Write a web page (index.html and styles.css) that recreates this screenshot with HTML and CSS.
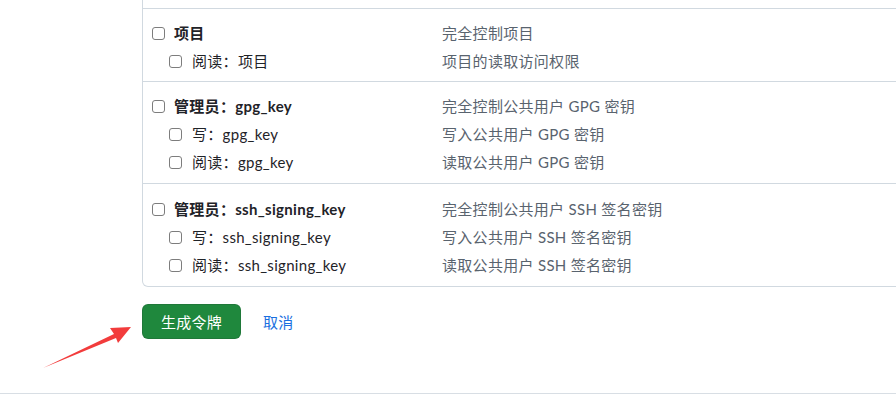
FILE: index.html
```html
<!DOCTYPE html>
<html lang="zh-CN">
<head>
<meta charset="utf-8">
<title>生成令牌</title>
<link rel="stylesheet" href="styles.css">
</head>
<body>
<div class="page">
  <div class="scopes">
    <div class="tail"></div>
    <div class="group g1">
      <label class="row top"><span class="lab"><input type="checkbox" class="cb"><span class="name">项目</span></span><span class="desc">完全控制项目</span></label>
      <label class="row sub"><span class="lab"><input type="checkbox" class="cb"><span class="name">阅读：项目</span></span><span class="desc">项目的读取访问权限</span></label>
    </div>
    <div class="group g2">
      <label class="row top"><span class="lab"><input type="checkbox" class="cb"><span class="name">管理员：gpg_key</span></span><span class="desc">完全控制公共用户 GPG 密钥</span></label>
      <label class="row sub"><span class="lab"><input type="checkbox" class="cb"><span class="name">写：gpg_key</span></span><span class="desc">写入公共用户 GPG 密钥</span></label>
      <label class="row sub"><span class="lab"><input type="checkbox" class="cb"><span class="name">阅读：gpg_key</span></span><span class="desc">读取公共用户 GPG 密钥</span></label>
    </div>
    <div class="group g3">
      <label class="row top"><span class="lab"><input type="checkbox" class="cb"><span class="name">管理员：ssh_signing_key</span></span><span class="desc">完全控制公共用户 SSH 签名密钥</span></label>
      <label class="row sub"><span class="lab"><input type="checkbox" class="cb"><span class="name">写：ssh_signing_key</span></span><span class="desc">写入公共用户 SSH 签名密钥</span></label>
      <label class="row sub"><span class="lab"><input type="checkbox" class="cb"><span class="name">阅读：ssh_signing_key</span></span><span class="desc">读取公共用户 SSH 签名密钥</span></label>
    </div>
  </div>
  <div class="actions">
    <button class="btn-primary" type="button">生成令牌</button>
    <a class="cancel" href="#">取消</a>
  </div>
  <hr class="divider">
  <svg class="arrow" width="140" height="90" viewBox="0 0 140 90" aria-hidden="true">
    <polygon points="43,68 114,34 110,28 131,27 118,43 116,38" fill="#f23c3c"/>
  </svg>
</div>
</body>
</html>
```

FILE: styles.css
```css
html, body {
  margin: 0;
  padding: 0;
  background: #fff;
  overflow: hidden;
}
body {
  font-family: Lato, "Noto Sans CJK SC", sans-serif;
  font-size: 15px;
  letter-spacing: 0.3px;
  color: #1f2328;
}
.page {
  position: relative;
  width: 896px;
  height: 407px;
}
.scopes {
  margin-left: 142px;
  width: 780px;
  border: 1px solid #d1d9e0;
  border-top: 0;
  border-radius: 0 0 6px 6px;
}
.tail {
  height: 8px;
}
.group {
  border-top: 1px solid #d1d9e0;
  padding: 10px 0 7px 9px;
}
.g1 {
  padding-bottom: 6px;
}
.g3 {
  padding-top: 11px;
}
.row {
  display: grid;
  grid-template-columns: 290px 1fr;
  align-items: center;
  height: 28px;
}
.lab {
  display: flex;
  align-items: center;
}
.sub .lab {
  padding-left: 17px;
}
.cb {
  appearance: none;
  -webkit-appearance: none;
  margin: 0;
  width: 13px;
  height: 13px;
  border: 1px solid #7d7d7d;
  border-radius: 3px;
  background: #fff;
  flex: none;
}
.top .cb {
  margin-right: 9px;
}
.sub .cb {
  margin-right: 10px;
}
.top .name {
  font-weight: 700;
  color: #1f2328;
}
.name {
  line-height: 20px;
}
.desc {
  color: #59636e;
  line-height: 20px;
}
.actions {
  display: flex;
  align-items: center;
  margin: 17px 0 0 142px;
  gap: 22px;
}
.btn-primary {
  font: inherit;
  font-size: 15px;
  letter-spacing: 0.3px;
  color: #fff;
  background: #1f883d;
  border: 1px solid rgba(31, 35, 40, 0.15);
  border-radius: 6px;
  width: 99px;
  height: 35px;
  padding: 0;
}
.cancel {
  color: #1a6fe0;
  text-decoration: none;
}
.divider {
  position: absolute;
  left: 0;
  top: 393px;
  width: 100%;
  margin: 0;
  border: 0;
  border-top: 1px solid #d8dee4;
}
.arrow {
  position: absolute;
  left: 0;
  top: 300px;
}
```
